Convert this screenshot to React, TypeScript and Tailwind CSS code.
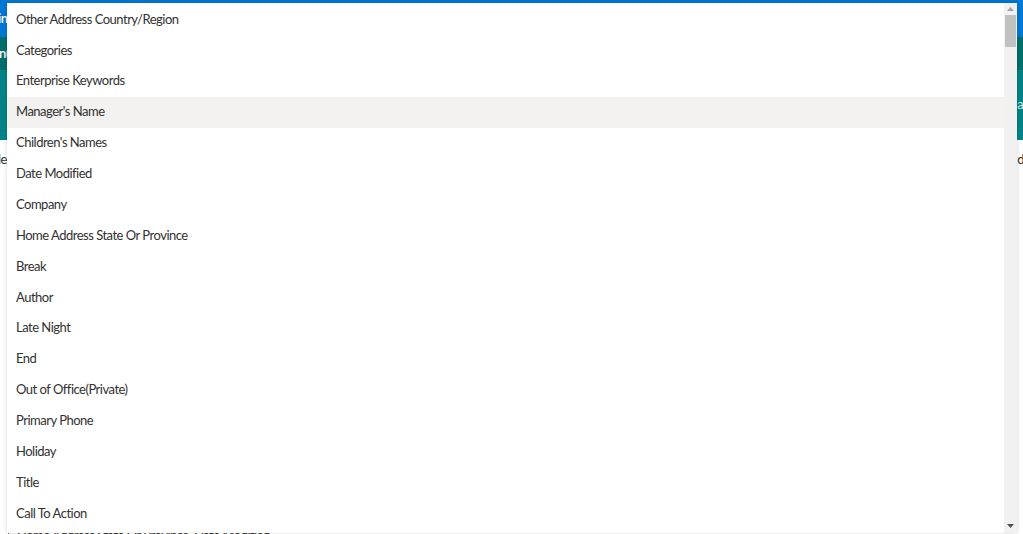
const items = [
  'Other Address Country/Region',
  'Categories',
  'Enterprise Keywords',
  "Manager's Name",
  "Children's Names",
  'Date Modified',
  'Company',
  'Home Address State Or Province',
  'Break',
  'Author',
  'Late Night',
  'End',
  'Out of Office(Private)',
  'Primary Phone',
  'Holiday',
  'Title',
  'Call To Action',
];

function Scrollbar() {
  return (
    <div className="flex w-[13px] flex-col items-center bg-[#f1f1f1]">
      <div className="flex h-[12px] w-full items-center justify-center">
        <svg width="7" height="4" viewBox="0 0 7 4">
          <path d="M3.5 0 L7 4 L0 4 Z" fill="#a3a3a3" />
        </svg>
      </div>
      <div className="h-[32px] w-[11px] bg-[#c1c1c1]" />
      <div className="flex-1" />
      <div className="flex h-[14px] w-full items-center justify-center">
        <svg width="7" height="4" viewBox="0 0 7 4">
          <path d="M0 0 L7 0 L3.5 4 Z" fill="#505050" />
        </svg>
      </div>
    </div>
  );
}

export default function App() {
  return (
    <div
      className="relative h-[534px] w-[1023px] overflow-hidden bg-white text-[13px] tracking-[-0.5px] text-[#323130]"
      style={{ fontFamily: 'Lato, "Segoe UI", sans-serif' }}
    >
      {/* Page behind the dropdown */}
      <div className="flex h-[37px] items-center bg-[#0078d4] font-semibold text-white">
        <span className="-ml-[2px]">in</span>
      </div>
      <div className="flex h-[33px] items-center bg-[#006e6b] font-semibold text-white">
        <span className="-ml-[1px]">nu</span>
      </div>
      <div className="flex h-[70px] items-center justify-end bg-[#038387] text-[#cde8e8]">
        <span className="-mr-[6px]">ac</span>
      </div>
      <div className="flex h-[40px] items-center justify-between text-[#323130]">
        <span className="-ml-[2px]">le</span>
        <span className="-mr-[1px]">d</span>
      </div>
      <div className="h-[345px]" />
      <div className="ml-[8px] border-l border-[#605e5c] pl-[8px] leading-[20px] text-[#323130]">
        Home Address State Or Province, Date Modified
      </div>

      {/* Dropdown list */}
      <div className="absolute left-[7px] top-[3px] flex h-[530px] w-[1010px] bg-white shadow-[0_0_4px_rgba(0,0,0,0.18)]">
        <ul className="flex-1 pt-[1px]">
          {items.map((item, i) => (
            <li
              key={item}
              className={`flex h-[30.875px] items-center pl-[9px] ${i === 3 ? 'bg-[#f3f2f1]' : ''}`}
            >
              {item}
            </li>
          ))}
        </ul>
        <Scrollbar />
      </div>
    </div>
  );
}
